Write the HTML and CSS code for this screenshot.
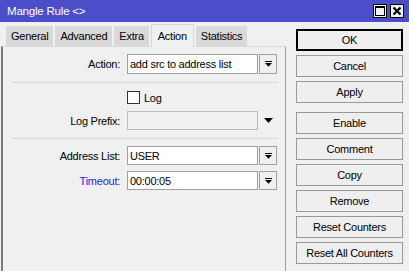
FILE: index.html
```html
<!DOCTYPE html>
<html>
<head>
<meta charset="utf-8">
<link rel="stylesheet" href="styles.css">
</head>
<body>
<div class="window">
  <div class="titlebar">
    <span class="title">Mangle Rule &lt;&gt;</span>
    <div class="tb-buttons">
      <span class="tb-btn"><svg width="10" height="10" viewBox="0 0 10 10"><rect x="0.5" y="0.5" width="9" height="9" fill="none" stroke="#000"/><rect x="0" y="0" width="10" height="2" fill="#000"/></svg></span>
      <span class="tb-btn"><svg width="10" height="10" viewBox="0 0 10 10"><path d="M1.5 1.5 L8.5 8.5 M8.5 1.5 L1.5 8.5" stroke="#000" stroke-width="2.2"/></svg></span>
    </div>
  </div>
  <div class="main">
    <div class="left">
      <div class="tabs">
        <div class="tab">General</div>
        <div class="tab">Advanced</div>
        <div class="tab">Extra</div>
        <div class="tab active">Action</div>
        <div class="tab">Statistics</div>
      </div>
      <div class="panel">
        <div class="row row-action">
          <span class="lbl">Action:</span>
          <div class="field">add src to address list</div>
          <div class="dd"><svg width="7" height="6" viewBox="0 0 7 6"><rect x="0" y="0" width="7" height="1" fill="#000"/><polygon points="0,2 7,2 3.5,5.8" fill="#000"/></svg></div>
        </div>
        <div class="sep"></div>
        <div class="row row-check">
          <span class="lbl"></span>
          <span class="checkbox"></span>
          <span>Log</span>
        </div>
        <div class="row row-prefix">
          <span class="lbl">Log Prefix:</span>
          <div class="field disabled"></div>
          <svg class="tri" width="9" height="5" viewBox="0 0 9 5"><polygon points="0,0 9,0 4.5,5" fill="#000"/></svg>
        </div>
        <div class="sep"></div>
        <div class="row row-addr">
          <span class="lbl">Address List:</span>
          <div class="field">USER</div>
          <div class="dd"><svg width="7" height="6" viewBox="0 0 7 6"><rect x="0" y="0" width="7" height="1" fill="#000"/><polygon points="0,2 7,2 3.5,5.8" fill="#000"/></svg></div>
        </div>
        <div class="row row-timeout">
          <span class="lbl blue">Timeout:</span>
          <div class="field">00:00:05</div>
          <div class="dd"><svg width="7" height="6" viewBox="0 0 7 6"><rect x="0" y="0" width="7" height="1" fill="#000"/><polygon points="0,2 7,2 3.5,5.8" fill="#000"/></svg></div>
        </div>
      </div>
    </div>
    <div class="right">
      <div class="btn default">OK</div>
      <div class="btn">Cancel</div>
      <div class="btn">Apply</div>
      <div class="btn group-start">Enable</div>
      <div class="btn">Comment</div>
      <div class="btn">Copy</div>
      <div class="btn">Remove</div>
      <div class="btn">Reset Counters</div>
      <div class="btn">Reset All Counters</div>
    </div>
  </div>
</div>
</body>
</html>
```
FILE: styles.css
```css
* { box-sizing: border-box; }
html, body { margin: 0; padding: 0; }
body {
  width: 409px;
  height: 271px;
  overflow: hidden;
  background: #f0f0f0;
  font-family: "Liberation Sans", Arial, sans-serif;
  font-size: 11px;
  letter-spacing: -0.25px;
  color: #000;
}
.window { display: flex; flex-direction: column; height: 271px; }
.titlebar {
  height: 22px;
  background: #4a4fc9;
  color: #fff;
  display: flex;
  align-items: center;
  padding: 0 5px 0 7px;
}
.title { flex: 1; font-size: 11.5px; letter-spacing: -0.2px; }
.tb-buttons { display: flex; gap: 3px; }
.tb-btn {
  width: 14px; height: 14px;
  border: 1px solid #000;
  background: #f0f0f0;
  display: flex; align-items: center; justify-content: center;
}
.main { flex: 1; display: flex; min-height: 0; }
.left { width: 286px; display: flex; flex-direction: column; }
.tabs {
  height: 24px;
  display: flex;
  align-items: flex-end;
  padding-left: 6px;
  gap: 2px;
}
.tab {
  height: 20px;
  padding: 0 5px;
  background: #d9d9d9;
  display: flex;
  align-items: center;
}
.tab.active {
  height: 23px;
  padding: 0 6px;
  margin-bottom: -1px;
  background: #f0f0f0;
  border: 1px solid #d9d9d9;
  border-bottom: none;
  position: relative;
  z-index: 1;
}
.panel {
  flex: 1;
  margin-left: 1px;
  border-top: 1px solid #d9d9d9;
  border-right: 1px solid #a0a0a0;
  border-left: 2px solid #7a7a7a;
  padding-top: 7px;
}
.row { display: flex; align-items: center; height: 19px; }
.row-action { height: 20px; }
.row-check { height: 13px; margin-top: 8px; }
.row-prefix { margin-top: 7px; }
.row-addr { margin-top: 7px; }
.row-timeout { margin-top: 6px; }
.lbl { width: 124px; padding-right: 7px; text-align: right; }
.blue { color: #1c1ce8; }
.field {
  width: 131px;
  height: 100%;
  border: 1px solid #a0a0a0;
  background: #fff;
  padding-left: 2px;
  display: flex;
  align-items: center;
}
.field.disabled { background: #f0f0f0; border-color: #bcbcbc; }
.dd {
  width: 18px;
  height: 100%;
  margin-left: 1px;
  border: 1px solid #a0a0a0;
  background: #f0f0f0;
  display: flex; align-items: center; justify-content: center;
}
.tri { margin-left: 6px; }
.checkbox {
  width: 13px; height: 13px;
  border: 1px solid #333;
  background: #fff;
  margin-right: 4px;
}
.sep {
  height: 1px;
  background: #d9d9d9;
  margin: 8px 7px 0 9px;
}
.right {
  flex: 1;
  padding: 7px 6px 0 10px;
  display: flex;
  flex-direction: column;
  gap: 4px;
}
.btn {
  height: 22px;
  flex: none;
  border: 1px solid #999;
  background: #efefef;
  display: flex; align-items: center; justify-content: center;
}
.btn.default { border: 2px solid #000; }
.btn.group-start { margin-top: 5px; }
```
